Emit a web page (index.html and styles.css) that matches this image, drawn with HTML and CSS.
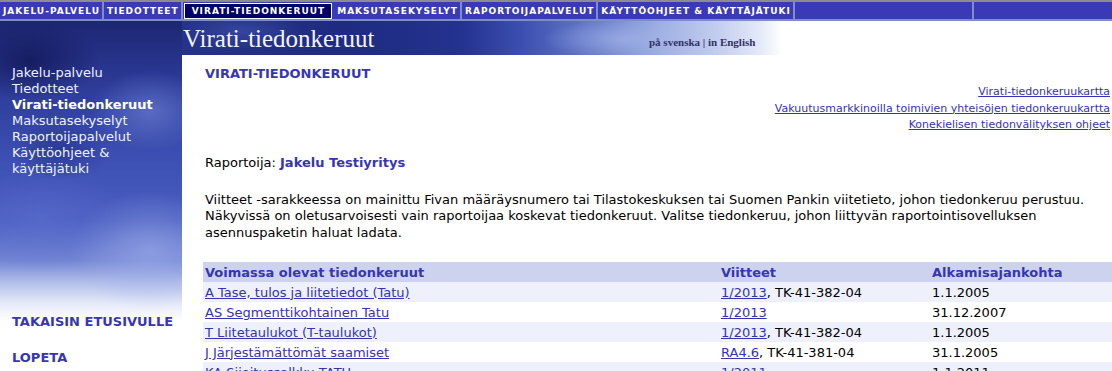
FILE: index.html
```html
<!DOCTYPE html>
<html lang="fi">
<head>
<meta charset="utf-8">
<title>Virati-tiedonkeruut</title>
<link rel="stylesheet" href="styles.css">
</head>
<body>
<nav class="topnav">
  <a class="tn" href="#">JAKELU-PALVELU</a>
  <a class="tn" href="#">TIEDOTTEET</a>
  <a class="tn active" href="#">VIRATI-TIEDONKERUUT</a>
  <a class="tn" href="#">MAKSUTASEKYSELYT</a>
  <a class="tn" href="#">RAPORTOIJAPALVELUT</a>
  <a class="tn" href="#">KÄYTTÖOHJEET &amp; KÄYTTÄJÄTUKI</a>
  <span class="tn fill1"></span>
  <span class="tn fill2"></span>
</nav>
<div class="page">
  <aside class="sidebar">
    <ul class="sidenav">
      <li><a href="#">Jakelu-palvelu</a></li>
      <li><a href="#">Tiedotteet</a></li>
      <li><a href="#" class="current">Virati-tiedonkeruut</a></li>
      <li><a href="#">Maksutasekyselyt</a></li>
      <li><a href="#">Raportoijapalvelut</a></li>
      <li><a href="#">Käyttöohjeet &amp; käyttäjätuki</a></li>
    </ul>
    <div class="sidebottom">
      <a href="#" class="bold-link">TAKAISIN ETUSIVULLE</a>
      <a href="#" class="bold-link">LOPETA</a>
    </div>
  </aside>
  <header class="banner">
    <div class="banner-title">Virati-tiedonkeruut</div>
    <div class="lang"><a href="#">på svenska</a> | <a href="#">in English</a></div>
  </header>
  <main class="content">
    <h1 class="title">VIRATI-TIEDONKERUUT</h1>
    <div class="quicklinks">
      <a href="#">Virati-tiedonkeruukartta</a>
      <a href="#">Vakuutusmarkkinoilla toimivien yhteisöjen tiedonkeruukartta</a>
      <a href="#">Konekielisen tiedonvälityksen ohjeet</a>
    </div>
    <p class="reporter">Raportoija: <strong>Jakelu Testiyritys</strong></p>
    <p class="intro">Viitteet -sarakkeessa on mainittu Fivan määräysnumero tai Tilastokeskuksen tai Suomen Pankin viitetieto, johon tiedonkeruu perustuu. Näkyvissä on oletusarvoisesti vain raportoijaa koskevat tiedonkeruut. Valitse tiedonkeruu, johon liittyvän raportointisovelluksen asennuspaketin haluat ladata.</p>
    <table class="list">
      <thead>
        <tr><th class="c1">Voimassa olevat tiedonkeruut</th><th class="c2">Viitteet</th><th class="c3">Alkamisajankohta</th></tr>
      </thead>
      <tbody>
        <tr class="odd"><td><a href="#">A Tase, tulos ja liitetiedot (Tatu)</a></td><td><a href="#">1/2013</a>, TK-41-382-04</td><td>1.1.2005</td></tr>
        <tr><td><a href="#">AS Segmenttikohtainen Tatu</a></td><td><a href="#">1/2013</a></td><td>31.12.2007</td></tr>
        <tr class="odd"><td><a href="#">T Liitetaulukot (T-taulukot)</a></td><td><a href="#">1/2013</a>, TK-41-382-04</td><td>1.1.2005</td></tr>
        <tr><td><a href="#">J Järjestämättömät saamiset</a></td><td><a href="#">RA4.6</a>, TK-41-381-04</td><td>31.1.2005</td></tr>
        <tr class="odd"><td><a href="#">KA Sijoitussalkku TATU</a></td><td><a href="#">1/2011</a></td><td>1.1.2011</td></tr>
      </tbody>
    </table>
  </main>
</div>
</body>
</html>
```
FILE: styles.css
```css
html, body {
  margin: 0;
  padding: 0;
  background: #ffffff;
  overflow: hidden;
}
body {
  font-family: "DejaVu Sans", Verdana, sans-serif;
  font-size: 13px;
  color: #000000;
  height: 371px;
}
a { color: #3333b3; }

/* top navigation */
.topnav {
  display: flex;
  height: 17px;
  background: #3a3ab6;
  border-top: 2px solid #8c8c8c;
  border-bottom: 2px solid #7e8cc8;
}
.tn {
  display: flex;
  align-items: center;
  padding: 0 2px 0 3px;
  color: #ffffff;
  text-decoration: none;
  font-weight: bold;
  font-size: 9px;
  letter-spacing: 1px;
  border-right: 2px solid #7e8cc8;
  white-space: nowrap;
}
.tn.active {
  background: #000066;
  outline: 1px solid #ffffff;
  outline-offset: -1px;
  margin: 1px 2px 0 1px;
  padding: 0 7px 0 8px;
  border-right: none;
}
.fill1 { width: 172px; }
.fill2 { flex: 1; border-right: none; }

/* page grid */
.page {
  display: grid;
  grid-template-columns: 182px 1fr;
  grid-template-rows: 34px 1fr;
  height: 350px;
}
.sidebar {
  grid-row: 1 / 3;
  grid-column: 1;
  display: flex;
  flex-direction: column;
  background:
    radial-gradient(ellipse 60px 40px at 150px 90px, rgba(120,140,220,0.55), rgba(120,140,220,0) 100%),
    radial-gradient(ellipse 50px 30px at 60px 130px, rgba(30,40,120,0.5), rgba(30,40,120,0) 100%),
    radial-gradient(ellipse 90px 50px at 40px 200px, rgba(95,115,210,0.5), rgba(95,115,210,0) 100%),
    radial-gradient(ellipse 80px 60px at 150px 230px, rgba(160,175,235,0.6), rgba(160,175,235,0) 100%),
    radial-gradient(ellipse 70px 40px at 30px 40px, rgba(15,20,80,0.7), rgba(15,20,80,0) 100%),
    linear-gradient(to bottom, #1c2672 0px, #2c3a96 60px, #3d50b4 140px, #4a5ec0 200px, #7486d4 240px, #b4c0ea 262px, #e4e9f8 282px, #ffffff 300px);
}
.sidenav {
  list-style: none;
  margin: 0;
  padding: 44px 0 0 12px;
  font-size: 13px;
  line-height: 16px;
}
.sidenav a {
  color: #eef2ff;
  text-decoration: none;
}
.sidenav a.current { font-weight: bold; color: #ffffff; }
.sidenav li:last-child { width: 110px; }
.sidebottom {
  margin-top: auto;
  padding: 0 0 16px 12px;
  display: flex;
  flex-direction: column;
  gap: 20px;
}
.bold-link {
  font-weight: bold;
  font-size: 13px;
  line-height: 16px;
  color: #3636b4;
  text-decoration: none;
}

/* banner */
.banner {
  grid-row: 1;
  grid-column: 2;
  display: grid;
  grid-template-columns: 467px auto;
  align-items: end;
  background:
    radial-gradient(ellipse 60px 18px at 60px 10px, rgba(70,90,180,0.5), rgba(70,90,180,0) 100%),
    radial-gradient(ellipse 80px 20px at 440px 18px, rgba(170,185,235,0.6), rgba(170,185,235,0) 100%),
    linear-gradient(to right, #26338a 0px, #1f2b80 160px, #243290 280px, #3c4fb0 340px, #6a80cc 420px, #9fb0e2 480px, #c6d0f0 540px, #e6ebf9 580px, #ffffff 600px);
}
.banner-title {
  font-family: "Liberation Serif", "Times New Roman", serif;
  font-size: 25px;
  line-height: 28px;
  color: #f2f4ff;
  padding-left: 1px;
  padding-bottom: 2px;
}
.lang {
  font-family: "Liberation Serif", "Times New Roman", serif;
  font-size: 11px;
  font-weight: bold;
  color: #333366;
  align-self: start;
  padding-top: 15px;
}
.lang a { color: #333366; text-decoration: none; }

/* content */
.content {
  grid-row: 2;
  grid-column: 2;
  padding: 11px 2px 0 23px;
}
.title {
  margin: 0;
  font-size: 13px;
  line-height: 16px;
  font-weight: bold;
  color: #3636b4;
}
.quicklinks {
  display: flex;
  flex-direction: column;
  align-items: flex-end;
  margin-top: 2px;
  font-size: 11px;
  line-height: 16.5px;
}
.quicklinks a { color: #3333b3; }
.reporter {
  margin: 21px 0 0 0;
  line-height: 16px;
}
.reporter strong { color: #3636b4; }
.intro {
  margin: 21px 0 0 0;
  line-height: 16.6px;
}
.list {
  margin: 21px 0 0 -2px;
  width: calc(100% + 4px);
  border-collapse: collapse;
}
.list th, .list td {
  text-align: left;
  padding: 0 2px;
  height: 20px;
  font-size: 13px;
  white-space: nowrap;
}
.list th {
  background: #cdd3ee;
  color: #3636b4;
  font-weight: bold;
}
.list th.c1 { width: 512px; }
.list th.c2 { width: 207px; }
.list tr.odd td { background: #eef1fc; }
.list td a { color: #3333b3; }
```
